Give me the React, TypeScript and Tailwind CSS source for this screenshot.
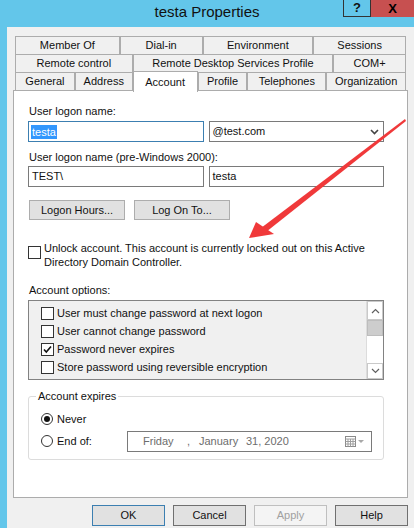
import React from "react";

const font = "font-['Liberation_Sans',Arial,sans-serif]";

const tabRows = [
  [
    { label: "Member Of", w: "w-[105px]" },
    { label: "Dial-in", w: "w-[83px]" },
    { label: "Environment", w: "w-[111px]" },
    { label: "Sessions", w: "w-[93px]" },
  ],
  [
    { label: "Remote control", w: "w-[118px]" },
    { label: "Remote Desktop Services Profile", w: "w-[201px]" },
    { label: "COM+", w: "w-[73px]" },
  ],
];

const bottomTabs = [
  { label: "General", w: "w-[60px]" },
  { label: "Address", w: "w-[58px]" },
  { label: "Account", w: "w-[65px]", active: true },
  { label: "Profile", w: "w-[50px]" },
  { label: "Telephones", w: "w-[79px]" },
  { label: "Organization", w: "w-[80px]" },
];

const options = [
  { label: "User must change password at next logon", checked: false },
  { label: "User cannot change password", checked: false },
  { label: "Password never expires", checked: true },
  { label: "Store password using reversible encryption", checked: false },
];

function CheckBox({ checked = false }: { checked?: boolean }) {
  return (
    <div className="w-[13px] h-[13px] border border-[#333333] bg-white flex items-center justify-center shrink-0">
      {checked && (
        <svg width="9" height="9" viewBox="0 0 9 9">
          <path d="M1 4.5 L3.3 7 L8 1.5" stroke="#111" strokeWidth="1.6" fill="none" />
        </svg>
      )}
    </div>
  );
}

function Radio({ on = false }: { on?: boolean }) {
  return (
    <div className="w-[12px] h-[12px] rounded-full border border-[#333333] bg-white flex items-center justify-center shrink-0">
      {on && <div className="w-[6px] h-[6px] rounded-full bg-[#111]" />}
    </div>
  );
}

function Tab({ label, w }: { label: string; w: string }) {
  return (
    <div className={`${w} h-full border border-b-0 border-[#acacac] flex items-center justify-center text-[#111]`}>
      {label}
    </div>
  );
}

export default function App() {
  return (
    <div className={`${font} w-[414px] h-[528px] bg-[#63c6ea] overflow-hidden flex flex-col text-[11px] text-[#111] relative`}>
      {/* title bar */}
      <div className="h-[27px] relative shrink-0 flex justify-center">
        <span className="text-[15px] leading-[18px] pt-[3px] text-[#111]">testa Properties</span>
        <div className="absolute right-0 top-0 flex h-[17px]">
          <div className="w-[28px] h-full border border-t-0 border-[#333] flex items-center justify-center font-bold text-[13px]">?</div>
          <div className="w-[43px] h-full bg-[#c75050] flex items-center justify-center font-bold text-[13px] text-black">X</div>
        </div>
      </div>

      {/* body */}
      <div className="flex-1 ml-[7px] bg-[#f0f0f0] pt-[9px] px-[6px] flex flex-col">
        <div className="mx-[2px] flex flex-col">
          {tabRows.map((row, i) => (
            <div key={i} className="flex h-[18px]">
              {row.map((t) => (
                <Tab key={t.label} label={t.label} w={t.w} />
              ))}
            </div>
          ))}
          <div className="flex h-[18px] items-end">
            {bottomTabs.map((t) =>
              t.active ? (
                <div
                  key={t.label}
                  className={`${t.w} h-[21px] -mb-[2px] relative z-10 bg-white border border-b-0 border-[#acacac] flex items-start justify-center pt-[2px]`}
                >
                  {t.label}
                </div>
              ) : (
                <Tab key={t.label} label={t.label} w={t.w} />
              )
            )}
          </div>
        </div>

        {/* panel */}
        <div className="h-[408px] bg-white border border-[#acacac] pl-[14px] pr-[23px] pt-[14px] flex flex-col">
          <div className="leading-[13px] pl-px">User logon name:</div>
          <div className="flex gap-[5px] mt-[3px]">
            <div className="w-[176px] h-[21px] border border-[#3c7fb1] flex items-center px-[2px]">
              <span className="bg-[#3297fd] text-white leading-[14px] px-px">testa</span>
            </div>
            <div className="w-[176px] h-[21px] border border-[#7a7a7a] flex items-center justify-between pl-[3px] pr-[4px]">
              <span>@test.com</span>
              <svg width="9" height="6" viewBox="0 0 9 6">
                <path d="M1 1 L4.5 4.5 L8 1" stroke="#444" strokeWidth="1.6" fill="none" />
              </svg>
            </div>
          </div>

          <div className="leading-[13px] mt-[9px] pl-px">User logon name (pre-Windows 2000):</div>
          <div className="flex gap-[5px] mt-[2px]">
            <div className="w-[176px] h-[21px] border border-[#7a7a7a] flex items-center px-[3px]">TEST\</div>
            <div className="w-[176px] h-[21px] border border-[#7a7a7a] flex items-center px-[3px]">testa</div>
          </div>

          <div className="flex gap-[9px] mt-[13px] ml-px">
            <div className="w-[96px] h-[20px] bg-[#e1e1e1] border border-[#adadad] flex items-center justify-center">Logon Hours...</div>
            <div className="w-[96px] h-[20px] bg-[#e1e1e1] border border-[#adadad] flex items-center justify-center">Log On To...</div>
          </div>

          <div className="flex gap-[3px] mt-[21px] items-start">
            <div className="mt-[5px]">
              <CheckBox />
            </div>
            <div className="leading-[14px]">
              Unlock account. This account is currently locked out on this Active
              <br />
              Directory Domain Controller.
            </div>
          </div>

          <div className="leading-[13px] mt-[15px] pl-px">Account options:</div>
          <div className="mt-[3px] h-[80px] border border-[#828282] bg-[#f0f0f0] flex">
            <div className="flex-1 flex flex-col pl-[12px] pt-[6px] gap-[5px]">
              {options.map((o) => (
                <div key={o.label} className="flex items-center gap-[3px] h-[13px]">
                  <CheckBox checked={o.checked} />
                  <span>{o.label}</span>
                </div>
              ))}
            </div>
            <div className="w-[17px] bg-white border-l border-[#dcdcdc] flex flex-col">
              <div className="h-[19px] border border-[#c9c9c9] flex items-center justify-center">
                <svg width="9" height="6" viewBox="0 0 9 6">
                  <path d="M1 5 L4.5 1.5 L8 5" stroke="#606060" strokeWidth="1.2" fill="none" />
                </svg>
              </div>
              <div className="h-[16px] bg-[#cdcdcd] border border-[#bdbdbd]" />
              <div className="flex-1" />
              <div className="h-[16px] border border-[#c9c9c9] flex items-center justify-center">
                <svg width="9" height="6" viewBox="0 0 9 6">
                  <path d="M1 1 L4.5 4.5 L8 1" stroke="#606060" strokeWidth="1.2" fill="none" />
                </svg>
              </div>
            </div>
          </div>

          {/* group box */}
          <div className="mt-[16px] h-[64px] border border-[#dcdcdc] rounded-[3px] relative flex flex-col pl-[12px]">
            <div className="absolute -top-[8px] left-[7px] bg-white px-[2px] leading-[14px]">Account expires</div>
            <div className="flex items-center gap-[4px] mt-[14px]">
              <Radio on />
              <span>Never</span>
            </div>
            <div className="flex items-center mt-[3px]">
              <div className="flex items-center gap-[4px] w-[86px]">
                <Radio />
                <span>End of:</span>
              </div>
              <div className="w-[245px] h-[21px] border border-[#7a7a7a] flex items-center text-[#6d6d6d] pl-[15px] pr-[6px]">
                <span className="w-[44px]">Friday</span>
                <span className="w-[12px]">,</span>
                <span className="w-[47px]">January</span>
                <span className="flex-1">31, 2020</span>
                <svg width="20" height="11" viewBox="0 0 20 11">
                  <rect x="0.5" y="0.5" width="10" height="10" fill="#fff" stroke="#8a8a8a" />
                  <path d="M0.5 3 H10.5 M3 3 V10.5 M5.5 3 V10.5 M8 3 V10.5 M0.5 5.5 H10.5 M0.5 8 H10.5" stroke="#a0a0a0" strokeWidth="1" />
                  <path d="M13 4 L19 4 L16 7 Z" fill="#a8a8a8" />
                </svg>
              </div>
            </div>
          </div>
        </div>

        {/* dialog buttons */}
        <div className="flex justify-end gap-[8px] mt-[7px]">
          <div className="w-[73px] h-[21px] bg-[#e1e1e1] border border-[#3c7fb1] flex items-center justify-center">OK</div>
          <div className="w-[73px] h-[21px] bg-[#e1e1e1] border border-[#707070] flex items-center justify-center">Cancel</div>
          <div className="w-[73px] h-[21px] bg-[#f4f4f4] border border-[#bfbfbf] flex items-center justify-center text-[#a0a0a0]">Apply</div>
          <div className="w-[73px] h-[21px] bg-[#e1e1e1] border border-[#707070] flex items-center justify-center">Help</div>
        </div>
      </div>

      {/* red annotation arrow */}
      <svg className="absolute left-0 top-0 pointer-events-none" width="414" height="528" viewBox="0 0 414 528">
        <polygon points="405,119 406,121 266,232 261,228" fill="#f0393a" />
        <polygon points="249,238 256,222 274,234" fill="#f0393a" />
      </svg>
    </div>
  );
}
